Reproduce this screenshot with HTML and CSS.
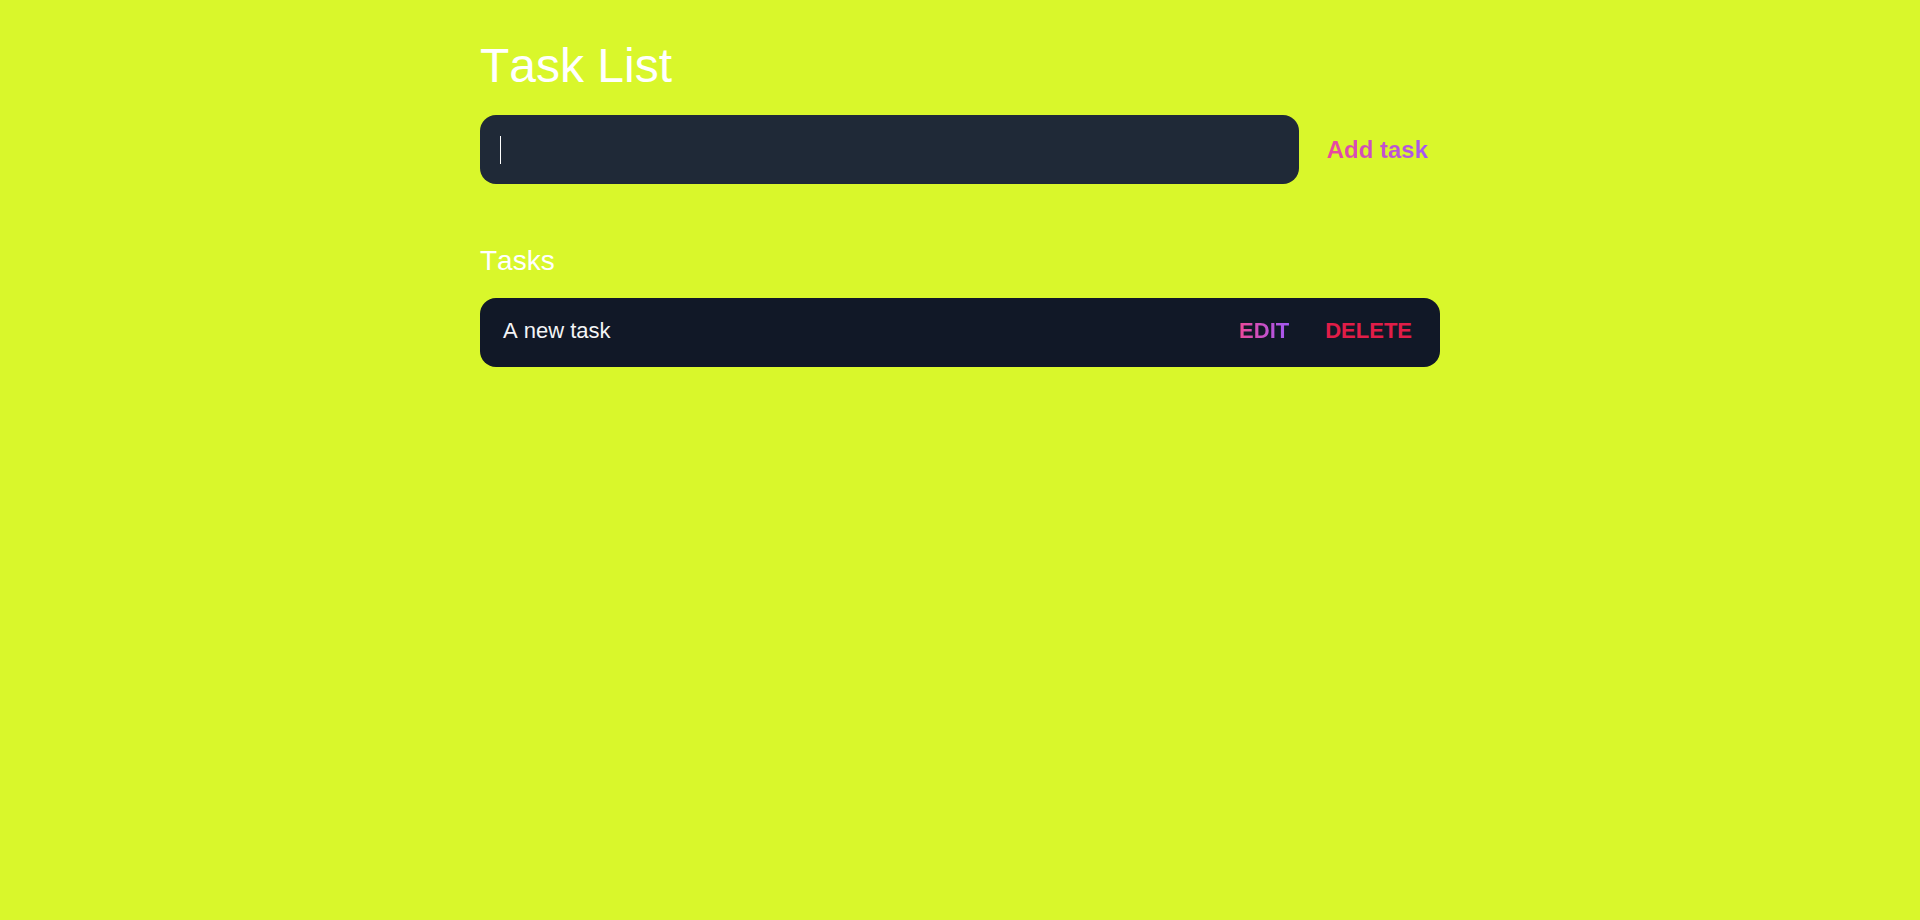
FILE: index.html
```html
<!DOCTYPE html>
<html lang="en">
<head>
<meta charset="utf-8">
<title>Task List</title>
<link rel="stylesheet" href="styles.css">
</head>
<body>
<main class="app">
  <h1 class="title">Task List</h1>
  <form class="add-form" onsubmit="return false;">
    <div class="input-wrap">
      <input class="add-input" type="text">
      <span class="caret"></span>
    </div>
    <button class="add-btn" type="submit"><span class="grad">Add task</span></button>
  </form>
  <h2 class="section-title">Tasks</h2>
  <ul class="task-list">
    <li class="task">
      <span class="task-text">A new task</span>
      <div class="task-actions">
        <button class="btn-edit"><span class="grad">EDIT</span></button>
        <button class="btn-delete">DELETE</button>
      </div>
    </li>
  </ul>
</main>
</body>
</html>
```

FILE: styles.css
```css
html, body {
  margin: 0;
  padding: 0;
  background: #d9f72b;
  height: 100%;
}
body {
  font-family: Arial, "Liberation Sans", Helvetica, sans-serif;
  font-kerning: none;
  color: #ffffff;
}
.app {
  width: 960px;
  margin: 0 auto;
  padding-top: 42px;
}
.title {
  margin: 0;
  font-size: 48px;
  line-height: 48px;
  font-weight: 400;
  color: #ffffff;
}
.add-form {
  display: flex;
  align-items: center;
  gap: 16px;
  margin-top: 25px;
}
.input-wrap {
  flex: 1;
  position: relative;
  display: flex;
}
.add-input {
  flex: 1;
  height: 69px;
  box-sizing: border-box;
  border: none;
  outline: none;
  border-radius: 16px;
  background: #1f2937;
  color: #ffffff;
  font-family: inherit;
  font-kerning: none;
  font-size: 24px;
  padding: 0 20px;
}
.caret {
  position: absolute;
  left: 20px;
  top: 21px;
  width: 1px;
  height: 28px;
  background: #ffffff;
  pointer-events: none;
}
.add-btn {
  background: none;
  border: none;
  padding: 0 12px;
  font-family: inherit;
  font-kerning: none;
  font-size: 24px;
  line-height: 24px;
  font-weight: 700;
  cursor: pointer;
}
.grad {
  background: linear-gradient(to right, #ec4899, #a259f5);
  -webkit-background-clip: text;
  background-clip: text;
  color: transparent;
}
.section-title {
  margin: 63px 0 0;
  font-size: 28px;
  line-height: 28px;
  font-weight: 400;
  color: #ffffff;
}
.task-list {
  list-style: none;
  margin: 23px 0 0;
  padding: 0;
}
.task {
  display: flex;
  align-items: center;
  justify-content: space-between;
  height: 69px;
  box-sizing: border-box;
  padding: 0 28px 4px 23px;
  border-radius: 16px;
  background: #111827;
}
.task-text {
  font-size: 22px;
  line-height: 22px;
  color: #f3f4f6;
}
.task-actions {
  display: flex;
  align-items: center;
  gap: 36px;
}
.btn-edit,
.btn-delete {
  background: none;
  border: none;
  padding: 0;
  font-family: inherit;
  font-kerning: none;
  font-size: 22px;
  line-height: 22px;
  font-weight: 700;
  cursor: pointer;
}
.btn-delete {
  color: #e11d48;
}
```
